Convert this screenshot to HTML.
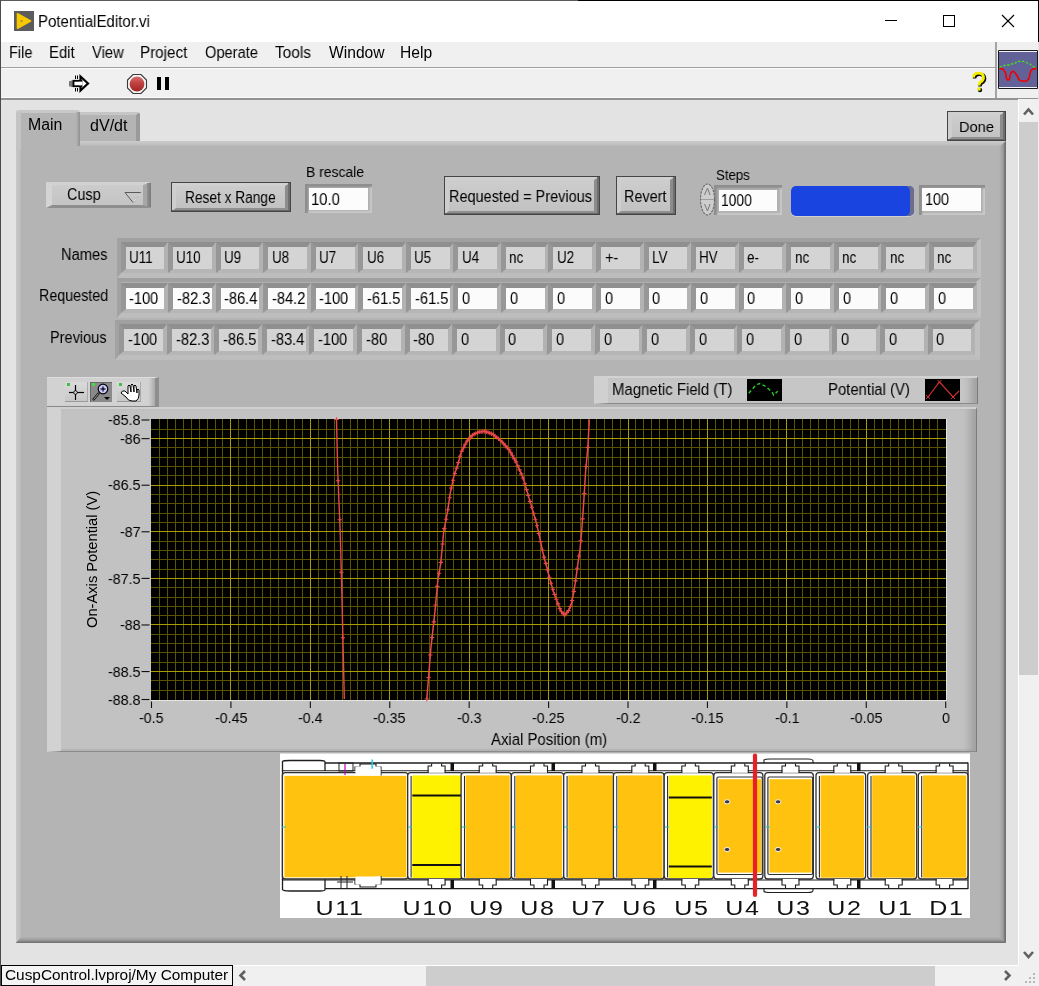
<!DOCTYPE html><html><head><meta charset="utf-8"><style>
html,body{margin:0;padding:0;width:1039px;height:986px;overflow:hidden;background:#e3e3e3;font-family:"Liberation Sans", sans-serif;position:relative}
.t{position:absolute;white-space:pre;line-height:1;will-change:transform;}
div{box-sizing:border-box}
</style></head><body>
<div style="position:absolute;left:0px;top:0px;width:1039px;height:42px;background:#fff;"></div>
<div style="position:absolute;left:0px;top:0px;width:578px;height:1px;background:#5a5a5a;"></div>
<div style="position:absolute;left:578px;top:0px;width:461px;height:1px;background:#000;"></div>
<div style="position:absolute;left:1038px;top:0px;width:1px;height:42px;background:#000;"></div>
<div style="position:absolute;left:0px;top:0px;width:1px;height:986px;background:#4a4a4a;"></div>
<div style="position:absolute;left:14px;top:11px;width:20px;height:20px;background:#5c5c5c;"></div>
<svg style="position:absolute;left:14px;top:11px" width="20" height="20"><polygon points="3.5,2.8 16.5,10 3.5,17.2" fill="#f8c800" stroke="#f8c800" stroke-width="1.6" stroke-linejoin="round"/><circle cx="7.5" cy="10" r="1.1" fill="#a08a40"/></svg>
<div class="t" style="left:38.47px;top:13.31px;font-size:16.05px;color:#000;transform-origin:0 0;transform:scaleX(0.9371);">PotentialEditor.vi</div>
<svg style="position:absolute;left:880px;top:8px" width="150" height="26"><line x1="5" y1="12.5" x2="17" y2="12.5" stroke="#000" stroke-width="1"/><rect x="63.5" y="7.5" width="11" height="11" fill="none" stroke="#000" stroke-width="1"/><line x1="122" y1="7" x2="134" y2="19" stroke="#000" stroke-width="1.1"/><line x1="134" y1="7" x2="122" y2="19" stroke="#000" stroke-width="1.1"/></svg>
<div style="position:absolute;left:1px;top:42px;width:1037px;height:25px;background:#f0f0f0;"></div>
<div style="position:absolute;left:1px;top:67px;width:995px;height:1px;background:#a0a0a0;"></div>
<div class="t" style="left:9.01px;top:45.18px;font-size:15.622px;color:#000;transform-origin:0 0;transform:scaleX(0.9311);">File</div>
<div class="t" style="left:48.98px;top:45.18px;font-size:15.622px;color:#000;transform-origin:0 0;transform:scaleX(0.9559);">Edit</div>
<div class="t" style="left:92.14px;top:45.18px;font-size:15.622px;color:#000;transform-origin:0 0;transform:scaleX(0.9477);">View</div>
<div class="t" style="left:140.25px;top:45.18px;font-size:15.622px;color:#000;transform-origin:0 0;transform:scaleX(0.9737);">Project</div>
<div class="t" style="left:204.81px;top:45.18px;font-size:15.622px;color:#000;transform-origin:0 0;transform:scaleX(0.9378);">Operate</div>
<div class="t" style="left:275.26px;top:45.18px;font-size:15.622px;color:#000;transform-origin:0 0;transform:scaleX(0.9844);">Tools</div>
<div class="t" style="left:328.84px;top:45.18px;font-size:15.622px;color:#000;transform-origin:0 0;transform:scaleX(0.9921);">Window</div>
<div class="t" style="left:400.23px;top:45.18px;font-size:15.622px;color:#000;transform-origin:0 0;transform:scaleX(0.9930);">Help</div>
<div style="position:absolute;left:1px;top:68px;width:1037px;height:30px;background:#f0f0f0;"></div>
<div style="position:absolute;left:1px;top:98px;width:1037px;height:2px;background:#929292;"></div>
<div style="position:absolute;left:1px;top:97px;width:995px;height:1px;background:#fafafa;"></div>
<div style="position:absolute;left:1px;top:68px;width:995px;height:1px;background:#fafafa;"></div>
<svg style="position:absolute;left:66px;top:72px" width="26" height="24"><polygon points="14.5,4.5 22,11.5 14.5,18.5" fill="#fff" stroke="#000" stroke-width="2.2" stroke-linejoin="miter"/><rect x="7.5" y="8.8" width="8" height="5.4" fill="#fff" stroke="#000" stroke-width="1.8"/><rect x="13.5" y="9.7" width="3" height="3.6" fill="#fff"/><line x1="4" y1="9" x2="4" y2="14.5" stroke="#000" stroke-width="1"/><line x1="6" y1="8.5" x2="6" y2="15" stroke="#000" stroke-width="1"/><line x1="9.5" y1="3.5" x2="9.5" y2="7" stroke="#000" stroke-width="1"/><line x1="11.5" y1="3.5" x2="11.5" y2="7" stroke="#000" stroke-width="1"/><line x1="9.5" y1="16" x2="9.5" y2="19.5" stroke="#000" stroke-width="1"/><line x1="11.5" y1="16" x2="11.5" y2="19.5" stroke="#000" stroke-width="1"/></svg>
<svg style="position:absolute;left:126px;top:73px" width="22" height="22"><defs><linearGradient id="rg" x1="0" y1="0" x2="0" y2="1"><stop offset="0" stop-color="#d66a6a"/><stop offset="0.45" stop-color="#c04040"/><stop offset="1" stop-color="#a02626"/></linearGradient></defs><polygon points="7,1.5 15,1.5 20.5,7 20.5,15 15,20.5 7,20.5 1.5,15 1.5,7" fill="#f4f4f4" stroke="#3a3a3a" stroke-width="1.1"/><circle cx="11" cy="11" r="7.4" fill="url(#rg)"/></svg>
<div style="position:absolute;left:157px;top:77px;width:4px;height:13px;background:#000;"></div>
<div style="position:absolute;left:165px;top:77px;width:4px;height:13px;background:#000;"></div>
<svg style="position:absolute;left:968px;top:70px" width="24" height="24"><path d="M6.5,8.5 Q6.5,4.2 11.5,4.2 Q16.5,4.2 16.5,8.5 Q16.5,11.5 13.5,13 Q12,14 12,16.5" fill="none" stroke="#111" stroke-width="3.6" stroke-linejoin="round"/><circle cx="12" cy="20" r="2.2" fill="#111"/><path d="M5.5,7.5 Q5.5,3.2 10.5,3.2 Q15.5,3.2 15.5,7.5 Q15.5,10.5 12.5,12 Q11,13 11,15.5" fill="none" stroke="#f2f000" stroke-width="2.8" stroke-linejoin="round"/><circle cx="11" cy="19" r="1.8" fill="#f2f000"/></svg>
<div style="position:absolute;left:995px;top:42px;width:2px;height:56px;background:#a4a4a4;"></div>
<div style="position:absolute;left:998px;top:50px;width:40px;height:39px;background:#1a1a1a;border-radius:1px;"></div>
<div style="position:absolute;left:999px;top:51px;width:38px;height:37px;background:#f4f4ff;"></div>
<div style="position:absolute;left:999px;top:52px;width:38px;height:35px;background:#626298;"></div>
<svg style="position:absolute;left:998px;top:50px" width="40" height="40"><polyline points="1.6,17.4 4,16.2 7.7,15 11.6,15 14,13.8 17,13.3 19.1,11.3 22.3,11.3 25.5,11.3 28.4,12.6 31.6,13.8 34.5,16.2 37,17.4" fill="none" stroke="#40e020" stroke-width="1.3" stroke-dasharray="2.5,1.5"/><polyline points="1.6,18.6 4.8,18.9 6.5,21.3 7.7,23.3 8.2,27.7 9.6,30.1 11.3,29.6 12.3,24.7 13.3,22.3 15.5,21.3 17.4,23.3 19.4,26.2 20.8,29.6 22.8,30.8 26.2,31.3 29.1,30.8 31.1,28.1 32,23.8 33,20.4 35.5,18.9 38.4,18.6" fill="none" stroke="#f00000" stroke-width="1.6"/></svg>
<div style="position:absolute;left:1018px;top:99px;width:21px;height:866px;background:#f0f0f0;border-left:1px solid #fff;"></div>
<div style="position:absolute;left:1019px;top:122px;width:19px;height:553px;background:#cdcdcd;"></div>
<svg style="position:absolute;left:1022px;top:105px" width="14" height="12"><polyline points="2,9.5 6.5,4.5 11,9.5" fill="none" stroke="#606060" stroke-width="2.6"/></svg>
<svg style="position:absolute;left:1022px;top:948px" width="14" height="12"><polyline points="2,4 6.5,9 11,4" fill="none" stroke="#606060" stroke-width="2.6"/></svg>
<div style="position:absolute;left:1px;top:965px;width:1018px;height:21px;background:#f0f0f0;border-top:1px solid #fff;"></div>
<div style="position:absolute;left:1018px;top:965px;width:21px;height:21px;background:#f0f0f0;"></div>
<div style="position:absolute;left:426px;top:966px;width:509px;height:20px;background:#cdcdcd;"></div>
<svg style="position:absolute;left:236px;top:968px" width="14" height="14"><polyline points="9,3 4.5,7.5 9,12" fill="none" stroke="#606060" stroke-width="2.6"/></svg>
<svg style="position:absolute;left:1001px;top:968px" width="14" height="14"><polyline points="4,3 8.5,7.5 4,12" fill="none" stroke="#606060" stroke-width="2.6"/></svg>
<svg style="position:absolute;left:1024px;top:973px" width="14" height="12"><rect x="9" y="0" width="2" height="2" fill="#b8b8b8"/><rect x="5" y="4" width="2" height="2" fill="#b8b8b8"/><rect x="9" y="4" width="2" height="2" fill="#b8b8b8"/><rect x="1" y="8" width="2" height="2" fill="#b8b8b8"/><rect x="5" y="8" width="2" height="2" fill="#b8b8b8"/><rect x="9" y="8" width="2" height="2" fill="#b8b8b8"/></svg>
<div style="position:absolute;left:1px;top:965px;width:232px;height:21px;background:#f4f4f4;border:1px solid #000;"></div>
<div class="t" style="left:4.73px;top:966.66px;font-size:15.408000000000001px;color:#000;transform-origin:0 0;transform:scaleX(0.9988);">CuspControl.lvproj/My Computer</div>
<div style="position:absolute;left:80px;top:112px;width:60px;height:30px;background:#b4b4b4;border-top:3px solid #c6c6c6;border-right:4px solid #9a9a9a;border-radius:0 3px 0 0;"></div>
<div style="position:absolute;left:16px;top:141px;width:990px;height:802px;background:#b4b4b4;"></div>
<div style="position:absolute;left:16px;top:141px;width:990px;height:5px;background:linear-gradient(#cacaca,#c2c2c2 60%,#b8b8b8);clip-path:polygon(0 0,100% 0,calc(100% - 6px) 100%,5px 100%);"></div>
<div style="position:absolute;left:16px;top:141px;width:5px;height:802px;background:linear-gradient(90deg,#c8c8c8,#c0c0c0 70%,#b8b8b8);clip-path:polygon(0 0,100% 5px,100% calc(100% - 5px),0 100%);"></div>
<div style="position:absolute;left:999px;top:141px;width:7px;height:802px;background:linear-gradient(90deg,#b4b4b4,#9e9e9e 55%,#7c7c7c 80%,#6a6a6a);clip-path:polygon(100% 0,100% 100%,0 calc(100% - 5px),0 6px);"></div>
<div style="position:absolute;left:16px;top:937px;width:990px;height:6px;background:linear-gradient(#b2b2b2,#9c9c9c 50%,#7e7e7e 80%,#6c6c6c);clip-path:polygon(5px 0,calc(100% - 7px) 0,100% 100%,0 100%);"></div>
<div style="position:absolute;left:16px;top:110px;width:64px;height:40px;background:#b4b4b4;border-top:3px solid #c8c8c8;border-left:5px solid #c4c4c4;border-radius:3px 3px 0 0;"></div>
<div style="position:absolute;left:76px;top:112px;width:4px;height:34px;background:linear-gradient(90deg,#b4b4b4,#a0a0a0 60%,#8e8e8e);"></div>
<div class="t" style="left:28.21px;top:116.59px;font-size:15.836000000000002px;color:#000;transform-origin:0 0;transform:scaleX(0.9905);">Main</div>
<div class="t" style="left:89.83px;top:118.49px;font-size:15.836000000000002px;color:#000;transform-origin:0 0;transform:scaleX(1.0138);">dV/dt</div>
<div style="position:absolute;left:947px;top:111px;width:59px;height:30px;border:1px solid #454545;background:#c6c6c6;"><div style="position:absolute;left:0;top:0;right:0;bottom:0;border-top:3px solid #d0d0d0;border-left:4px solid #cecece;border-right:5px solid #8c8c8c;border-bottom:3px solid #909090;background:linear-gradient(#cdcdcd,#c2c2c2);"></div><div style="position:absolute;right:0;top:0;width:2px;bottom:0;background:#6e6e6e;"></div><div style="position:absolute;left:0;right:0;height:1px;bottom:0;background:#666;"></div></div>
<div class="t" style="left:958.70px;top:118.77px;font-size:15.515px;color:#000;transform-origin:0 0;transform:scaleX(0.9423);">Done</div>
<div style="position:absolute;left:171px;top:182px;width:120px;height:30px;border:1px solid #454545;background:#c6c6c6;"><div style="position:absolute;left:0;top:0;right:0;bottom:0;border-top:3px solid #d0d0d0;border-left:4px solid #cecece;border-right:5px solid #8c8c8c;border-bottom:3px solid #909090;background:linear-gradient(#cdcdcd,#c2c2c2);"></div><div style="position:absolute;right:0;top:0;width:2px;bottom:0;background:#6e6e6e;"></div><div style="position:absolute;left:0;right:0;height:1px;bottom:0;background:#666;"></div></div>
<div class="t" style="left:185.38px;top:190.19px;font-size:15.836000000000002px;color:#000;transform-origin:0 0;transform:scaleX(0.8661);">Reset x Range</div>
<div style="position:absolute;left:444px;top:176px;width:156px;height:39px;border:1px solid #454545;background:#c6c6c6;"><div style="position:absolute;left:0;top:0;right:0;bottom:0;border-top:3px solid #d0d0d0;border-left:4px solid #cecece;border-right:5px solid #8c8c8c;border-bottom:3px solid #909090;background:linear-gradient(#cdcdcd,#c2c2c2);"></div><div style="position:absolute;right:0;top:0;width:2px;bottom:0;background:#6e6e6e;"></div><div style="position:absolute;left:0;right:0;height:1px;bottom:0;background:#666;"></div></div>
<div class="t" style="left:449.11px;top:189.09px;font-size:15.836000000000002px;color:#000;transform-origin:0 0;transform:scaleX(0.9152);">Requested = Previous</div>
<div style="position:absolute;left:616px;top:176px;width:60px;height:39px;border:1px solid #454545;background:#c6c6c6;"><div style="position:absolute;left:0;top:0;right:0;bottom:0;border-top:3px solid #d0d0d0;border-left:4px solid #cecece;border-right:5px solid #8c8c8c;border-bottom:3px solid #909090;background:linear-gradient(#cdcdcd,#c2c2c2);"></div><div style="position:absolute;right:0;top:0;width:2px;bottom:0;background:#6e6e6e;"></div><div style="position:absolute;left:0;right:0;height:1px;bottom:0;background:#666;"></div></div>
<div class="t" style="left:624.22px;top:189.09px;font-size:15.836000000000002px;color:#000;transform-origin:0 0;transform:scaleX(0.9084);">Revert</div>
<div style="position:absolute;left:46px;top:182px;width:105px;height:26px;border-top:3px solid #d2d2d2;border-left:6px solid #d4d4d4;border-right:8px solid #a6a6a6;border-bottom:3px solid #8e8e8e;background:linear-gradient(#cccccc,#c4c4c4);"></div>
<div style="position:absolute;left:147px;top:183px;width:4px;height:24px;background:linear-gradient(90deg,#929292,#7a7a7a);"></div>
<div class="t" style="left:66.98px;top:187.39px;font-size:15.836000000000002px;color:#000;transform-origin:0 0;transform:scaleX(0.9093);">Cusp</div>
<svg style="position:absolute;left:124px;top:191px" width="18" height="13"><polygon points="1,1.5 17,1.5 9,11.5" fill="none" stroke="#5a5a5a" stroke-width="1"/><polyline points="17,1.5 9,11.5" fill="none" stroke="#e8e8e8" stroke-width="1"/></svg>
<div class="t" style="left:305.66px;top:165.17px;font-size:14.445px;color:#000;transform-origin:0 0;transform:scaleX(0.9625);">B rescale</div>
<div style="position:absolute;left:305px;top:184px;width:67px;height:29px;background:#b0b0b0;box-shadow:inset 4px 4px 2px -1px #8e8e8e, inset -3px -3px 2px -1px #cacaca;"></div>
<div style="position:absolute;left:309px;top:188px;width:59px;height:22px;background:#fcfcfc;"></div>
<div class="t" style="left:311.37px;top:191.89px;font-size:15.836000000000002px;color:#000;transform-origin:0 0;transform:scaleX(0.9376);">10.0</div>
<div class="t" style="left:715.71px;top:167.12px;font-size:14.98px;color:#000;transform-origin:0 0;transform:scaleX(0.8816);">Steps</div>
<div style="position:absolute;left:714px;top:185px;width:68px;height:30px;background:#b0b0b0;box-shadow:inset 4px 4px 2px -1px #8e8e8e, inset -3px -3px 2px -1px #cacaca;"></div>
<div style="position:absolute;left:719px;top:190px;width:58px;height:21px;background:#fcfcfc;"></div>
<div class="t" style="left:720.95px;top:192.59px;font-size:15.836000000000002px;color:#000;transform-origin:0 0;transform:scaleX(0.8739);">1000</div>
<svg style="position:absolute;left:700px;top:183px" width="16" height="33"><ellipse cx="7.5" cy="16.5" rx="7" ry="15.5" fill="#cdcdcd" stroke="#6a6a6a" stroke-width="1.1" stroke-dasharray="2.5,1"/><line x1="1" y1="16.5" x2="14" y2="16.5" stroke="#a0a0a0"/><polyline points="4.5,12 7.5,5 10,12" fill="none" stroke="#777" stroke-width="1"/><polyline points="4.5,21 7.5,28 10,21" fill="none" stroke="#777" stroke-width="1"/></svg>
<div style="position:absolute;left:791px;top:185.5px;width:123px;height:30.5px;background:#1a44e0;border-radius:5px;box-shadow:inset -4px 0 0 0 #6c6c8c, 0 1px 0 0 #d0d0d0;"></div>
<div style="position:absolute;left:919px;top:185px;width:66px;height:30px;background:#b0b0b0;box-shadow:inset 4px 4px 2px -1px #8e8e8e, inset -3px -3px 2px -1px #cacaca;"></div>
<div style="position:absolute;left:922px;top:188px;width:59px;height:23px;background:#fcfcfc;"></div>
<div class="t" style="left:924.70px;top:192.39px;font-size:15.836000000000002px;color:#000;transform-origin:0 0;transform:scaleX(0.9102);">100</div>
<div style="position:absolute;left:116.5px;top:237.5px;width:864.9px;height:40.0px;background:#b0b0b0;border-top:4.5px solid #a0a0a0;border-left:4px solid #a2a2a2;border-right:5px solid #c0c0c0;border-bottom:5px solid #bdbdbd;"></div>
<div style="position:absolute;left:120.50px;top:242.0px;width:47.85px;height:30.5px;background:#d4d4d4;border-top:5px solid #8f8f8f;border-left:5.3px solid #979797;border-right:4.7px solid #b2b2b2;border-bottom:4.5px solid #b6b6b6;"></div>
<div class="t" style="left:128.87px;top:250.18px;font-size:15.622px;color:#000;transform-origin:0 0;transform:scaleX(0.8598);">U11</div>
<div style="position:absolute;left:168.05px;top:242.0px;width:47.85px;height:30.5px;background:#d4d4d4;border-top:5px solid #8f8f8f;border-left:5.3px solid #979797;border-right:4.7px solid #b2b2b2;border-bottom:4.5px solid #b6b6b6;"></div>
<div class="t" style="left:176.42px;top:250.18px;font-size:15.622px;color:#000;transform-origin:0 0;transform:scaleX(0.8598);">U10</div>
<div style="position:absolute;left:215.60px;top:242.0px;width:47.85px;height:30.5px;background:#d4d4d4;border-top:5px solid #8f8f8f;border-left:5.3px solid #979797;border-right:4.7px solid #b2b2b2;border-bottom:4.5px solid #b6b6b6;"></div>
<div class="t" style="left:223.97px;top:250.18px;font-size:15.622px;color:#000;transform-origin:0 0;transform:scaleX(0.8598);">U9</div>
<div style="position:absolute;left:263.15px;top:242.0px;width:47.85px;height:30.5px;background:#d4d4d4;border-top:5px solid #8f8f8f;border-left:5.3px solid #979797;border-right:4.7px solid #b2b2b2;border-bottom:4.5px solid #b6b6b6;"></div>
<div class="t" style="left:271.52px;top:250.18px;font-size:15.622px;color:#000;transform-origin:0 0;transform:scaleX(0.8598);">U8</div>
<div style="position:absolute;left:310.70px;top:242.0px;width:47.85px;height:30.5px;background:#d4d4d4;border-top:5px solid #8f8f8f;border-left:5.3px solid #979797;border-right:4.7px solid #b2b2b2;border-bottom:4.5px solid #b6b6b6;"></div>
<div class="t" style="left:319.07px;top:250.18px;font-size:15.622px;color:#000;transform-origin:0 0;transform:scaleX(0.8598);">U7</div>
<div style="position:absolute;left:358.25px;top:242.0px;width:47.85px;height:30.5px;background:#d4d4d4;border-top:5px solid #8f8f8f;border-left:5.3px solid #979797;border-right:4.7px solid #b2b2b2;border-bottom:4.5px solid #b6b6b6;"></div>
<div class="t" style="left:366.62px;top:250.18px;font-size:15.622px;color:#000;transform-origin:0 0;transform:scaleX(0.8598);">U6</div>
<div style="position:absolute;left:405.80px;top:242.0px;width:47.85px;height:30.5px;background:#d4d4d4;border-top:5px solid #8f8f8f;border-left:5.3px solid #979797;border-right:4.7px solid #b2b2b2;border-bottom:4.5px solid #b6b6b6;"></div>
<div class="t" style="left:414.17px;top:250.18px;font-size:15.622px;color:#000;transform-origin:0 0;transform:scaleX(0.8598);">U5</div>
<div style="position:absolute;left:453.35px;top:242.0px;width:47.85px;height:30.5px;background:#d4d4d4;border-top:5px solid #8f8f8f;border-left:5.3px solid #979797;border-right:4.7px solid #b2b2b2;border-bottom:4.5px solid #b6b6b6;"></div>
<div class="t" style="left:461.72px;top:250.18px;font-size:15.622px;color:#000;transform-origin:0 0;transform:scaleX(0.8598);">U4</div>
<div style="position:absolute;left:500.90px;top:242.0px;width:47.85px;height:30.5px;background:#d4d4d4;border-top:5px solid #8f8f8f;border-left:5.3px solid #979797;border-right:4.7px solid #b2b2b2;border-bottom:4.5px solid #b6b6b6;"></div>
<div class="t" style="left:509.41px;top:250.18px;font-size:15.622px;color:#000;transform-origin:0 0;transform:scaleX(0.8598);">nc</div>
<div style="position:absolute;left:548.45px;top:242.0px;width:47.85px;height:30.5px;background:#d4d4d4;border-top:5px solid #8f8f8f;border-left:5.3px solid #979797;border-right:4.7px solid #b2b2b2;border-bottom:4.5px solid #b6b6b6;"></div>
<div class="t" style="left:556.82px;top:250.18px;font-size:15.622px;color:#000;transform-origin:0 0;transform:scaleX(0.8598);">U2</div>
<div style="position:absolute;left:596.00px;top:242.0px;width:47.85px;height:30.5px;background:#d4d4d4;border-top:5px solid #8f8f8f;border-left:5.3px solid #979797;border-right:4.7px solid #b2b2b2;border-bottom:4.5px solid #b6b6b6;"></div>
<div class="t" style="left:604.70px;top:250.18px;font-size:15.622px;color:#000;transform-origin:0 0;transform:scaleX(0.9346);">+-</div>
<div style="position:absolute;left:643.55px;top:242.0px;width:47.85px;height:30.5px;background:#d4d4d4;border-top:5px solid #8f8f8f;border-left:5.3px solid #979797;border-right:4.7px solid #b2b2b2;border-bottom:4.5px solid #b6b6b6;"></div>
<div class="t" style="left:651.85px;top:250.18px;font-size:15.622px;color:#000;transform-origin:0 0;transform:scaleX(0.8598);">LV</div>
<div style="position:absolute;left:691.10px;top:242.0px;width:47.85px;height:30.5px;background:#d4d4d4;border-top:5px solid #8f8f8f;border-left:5.3px solid #979797;border-right:4.7px solid #b2b2b2;border-bottom:4.5px solid #b6b6b6;"></div>
<div class="t" style="left:699.40px;top:250.18px;font-size:15.622px;color:#000;transform-origin:0 0;transform:scaleX(0.8598);">HV</div>
<div style="position:absolute;left:738.65px;top:242.0px;width:47.85px;height:30.5px;background:#d4d4d4;border-top:5px solid #8f8f8f;border-left:5.3px solid #979797;border-right:4.7px solid #b2b2b2;border-bottom:4.5px solid #b6b6b6;"></div>
<div class="t" style="left:747.49px;top:250.18px;font-size:15.622px;color:#000;transform-origin:0 0;transform:scaleX(0.8598);">e-</div>
<div style="position:absolute;left:786.20px;top:242.0px;width:47.85px;height:30.5px;background:#d4d4d4;border-top:5px solid #8f8f8f;border-left:5.3px solid #979797;border-right:4.7px solid #b2b2b2;border-bottom:4.5px solid #b6b6b6;"></div>
<div class="t" style="left:794.71px;top:250.18px;font-size:15.622px;color:#000;transform-origin:0 0;transform:scaleX(0.8598);">nc</div>
<div style="position:absolute;left:833.75px;top:242.0px;width:47.85px;height:30.5px;background:#d4d4d4;border-top:5px solid #8f8f8f;border-left:5.3px solid #979797;border-right:4.7px solid #b2b2b2;border-bottom:4.5px solid #b6b6b6;"></div>
<div class="t" style="left:842.26px;top:250.18px;font-size:15.622px;color:#000;transform-origin:0 0;transform:scaleX(0.8598);">nc</div>
<div style="position:absolute;left:881.30px;top:242.0px;width:47.85px;height:30.5px;background:#d4d4d4;border-top:5px solid #8f8f8f;border-left:5.3px solid #979797;border-right:4.7px solid #b2b2b2;border-bottom:4.5px solid #b6b6b6;"></div>
<div class="t" style="left:889.81px;top:250.18px;font-size:15.622px;color:#000;transform-origin:0 0;transform:scaleX(0.8598);">nc</div>
<div style="position:absolute;left:928.85px;top:242.0px;width:47.85px;height:30.5px;background:#d4d4d4;border-top:5px solid #8f8f8f;border-left:5.3px solid #979797;border-right:4.7px solid #b2b2b2;border-bottom:4.5px solid #b6b6b6;"></div>
<div class="t" style="left:937.36px;top:250.18px;font-size:15.622px;color:#000;transform-origin:0 0;transform:scaleX(0.8598);">nc</div>
<div style="position:absolute;left:116.5px;top:278px;width:864.9px;height:40px;background:#b0b0b0;border-top:4.5px solid #a0a0a0;border-left:4px solid #a2a2a2;border-right:5px solid #c0c0c0;border-bottom:5px solid #bdbdbd;"></div>
<div style="position:absolute;left:120.50px;top:282.5px;width:47.85px;height:30.5px;background:#fbfbfb;border-top:5px solid #8f8f8f;border-left:5.3px solid #979797;border-right:4.7px solid #b2b2b2;border-bottom:4.5px solid #b6b6b6;"></div>
<div class="t" style="left:129.26px;top:290.68px;font-size:15.622px;color:#000;transform-origin:0 0;transform:scaleX(0.9346);">-100</div>
<div style="position:absolute;left:168.05px;top:282.5px;width:47.85px;height:30.5px;background:#fbfbfb;border-top:5px solid #8f8f8f;border-left:5.3px solid #979797;border-right:4.7px solid #b2b2b2;border-bottom:4.5px solid #b6b6b6;"></div>
<div class="t" style="left:176.81px;top:290.68px;font-size:15.622px;color:#000;transform-origin:0 0;transform:scaleX(0.9346);">-82.3</div>
<div style="position:absolute;left:215.60px;top:282.5px;width:47.85px;height:30.5px;background:#fbfbfb;border-top:5px solid #8f8f8f;border-left:5.3px solid #979797;border-right:4.7px solid #b2b2b2;border-bottom:4.5px solid #b6b6b6;"></div>
<div class="t" style="left:224.36px;top:290.68px;font-size:15.622px;color:#000;transform-origin:0 0;transform:scaleX(0.9346);">-86.4</div>
<div style="position:absolute;left:263.15px;top:282.5px;width:47.85px;height:30.5px;background:#fbfbfb;border-top:5px solid #8f8f8f;border-left:5.3px solid #979797;border-right:4.7px solid #b2b2b2;border-bottom:4.5px solid #b6b6b6;"></div>
<div class="t" style="left:271.91px;top:290.68px;font-size:15.622px;color:#000;transform-origin:0 0;transform:scaleX(0.9346);">-84.2</div>
<div style="position:absolute;left:310.70px;top:282.5px;width:47.85px;height:30.5px;background:#fbfbfb;border-top:5px solid #8f8f8f;border-left:5.3px solid #979797;border-right:4.7px solid #b2b2b2;border-bottom:4.5px solid #b6b6b6;"></div>
<div class="t" style="left:319.46px;top:290.68px;font-size:15.622px;color:#000;transform-origin:0 0;transform:scaleX(0.9346);">-100</div>
<div style="position:absolute;left:358.25px;top:282.5px;width:47.85px;height:30.5px;background:#fbfbfb;border-top:5px solid #8f8f8f;border-left:5.3px solid #979797;border-right:4.7px solid #b2b2b2;border-bottom:4.5px solid #b6b6b6;"></div>
<div class="t" style="left:367.01px;top:290.68px;font-size:15.622px;color:#000;transform-origin:0 0;transform:scaleX(0.9346);">-61.5</div>
<div style="position:absolute;left:405.80px;top:282.5px;width:47.85px;height:30.5px;background:#fbfbfb;border-top:5px solid #8f8f8f;border-left:5.3px solid #979797;border-right:4.7px solid #b2b2b2;border-bottom:4.5px solid #b6b6b6;"></div>
<div class="t" style="left:414.56px;top:290.68px;font-size:15.622px;color:#000;transform-origin:0 0;transform:scaleX(0.9346);">-61.5</div>
<div style="position:absolute;left:453.35px;top:282.5px;width:47.85px;height:30.5px;background:#fbfbfb;border-top:5px solid #8f8f8f;border-left:5.3px solid #979797;border-right:4.7px solid #b2b2b2;border-bottom:4.5px solid #b6b6b6;"></div>
<div class="t" style="left:462.18px;top:290.68px;font-size:15.622px;color:#000;transform-origin:0 0;transform:scaleX(0.9346);">0</div>
<div style="position:absolute;left:500.90px;top:282.5px;width:47.85px;height:30.5px;background:#fbfbfb;border-top:5px solid #8f8f8f;border-left:5.3px solid #979797;border-right:4.7px solid #b2b2b2;border-bottom:4.5px solid #b6b6b6;"></div>
<div class="t" style="left:509.73px;top:290.68px;font-size:15.622px;color:#000;transform-origin:0 0;transform:scaleX(0.9346);">0</div>
<div style="position:absolute;left:548.45px;top:282.5px;width:47.85px;height:30.5px;background:#fbfbfb;border-top:5px solid #8f8f8f;border-left:5.3px solid #979797;border-right:4.7px solid #b2b2b2;border-bottom:4.5px solid #b6b6b6;"></div>
<div class="t" style="left:557.28px;top:290.68px;font-size:15.622px;color:#000;transform-origin:0 0;transform:scaleX(0.9346);">0</div>
<div style="position:absolute;left:596.00px;top:282.5px;width:47.85px;height:30.5px;background:#fbfbfb;border-top:5px solid #8f8f8f;border-left:5.3px solid #979797;border-right:4.7px solid #b2b2b2;border-bottom:4.5px solid #b6b6b6;"></div>
<div class="t" style="left:604.83px;top:290.68px;font-size:15.622px;color:#000;transform-origin:0 0;transform:scaleX(0.9346);">0</div>
<div style="position:absolute;left:643.55px;top:282.5px;width:47.85px;height:30.5px;background:#fbfbfb;border-top:5px solid #8f8f8f;border-left:5.3px solid #979797;border-right:4.7px solid #b2b2b2;border-bottom:4.5px solid #b6b6b6;"></div>
<div class="t" style="left:652.38px;top:290.68px;font-size:15.622px;color:#000;transform-origin:0 0;transform:scaleX(0.9346);">0</div>
<div style="position:absolute;left:691.10px;top:282.5px;width:47.85px;height:30.5px;background:#fbfbfb;border-top:5px solid #8f8f8f;border-left:5.3px solid #979797;border-right:4.7px solid #b2b2b2;border-bottom:4.5px solid #b6b6b6;"></div>
<div class="t" style="left:699.93px;top:290.68px;font-size:15.622px;color:#000;transform-origin:0 0;transform:scaleX(0.9346);">0</div>
<div style="position:absolute;left:738.65px;top:282.5px;width:47.85px;height:30.5px;background:#fbfbfb;border-top:5px solid #8f8f8f;border-left:5.3px solid #979797;border-right:4.7px solid #b2b2b2;border-bottom:4.5px solid #b6b6b6;"></div>
<div class="t" style="left:747.48px;top:290.68px;font-size:15.622px;color:#000;transform-origin:0 0;transform:scaleX(0.9346);">0</div>
<div style="position:absolute;left:786.20px;top:282.5px;width:47.85px;height:30.5px;background:#fbfbfb;border-top:5px solid #8f8f8f;border-left:5.3px solid #979797;border-right:4.7px solid #b2b2b2;border-bottom:4.5px solid #b6b6b6;"></div>
<div class="t" style="left:795.03px;top:290.68px;font-size:15.622px;color:#000;transform-origin:0 0;transform:scaleX(0.9346);">0</div>
<div style="position:absolute;left:833.75px;top:282.5px;width:47.85px;height:30.5px;background:#fbfbfb;border-top:5px solid #8f8f8f;border-left:5.3px solid #979797;border-right:4.7px solid #b2b2b2;border-bottom:4.5px solid #b6b6b6;"></div>
<div class="t" style="left:842.58px;top:290.68px;font-size:15.622px;color:#000;transform-origin:0 0;transform:scaleX(0.9346);">0</div>
<div style="position:absolute;left:881.30px;top:282.5px;width:47.85px;height:30.5px;background:#fbfbfb;border-top:5px solid #8f8f8f;border-left:5.3px solid #979797;border-right:4.7px solid #b2b2b2;border-bottom:4.5px solid #b6b6b6;"></div>
<div class="t" style="left:890.13px;top:290.68px;font-size:15.622px;color:#000;transform-origin:0 0;transform:scaleX(0.9346);">0</div>
<div style="position:absolute;left:928.85px;top:282.5px;width:47.85px;height:30.5px;background:#fbfbfb;border-top:5px solid #8f8f8f;border-left:5.3px solid #979797;border-right:4.7px solid #b2b2b2;border-bottom:4.5px solid #b6b6b6;"></div>
<div class="t" style="left:937.68px;top:290.68px;font-size:15.622px;color:#000;transform-origin:0 0;transform:scaleX(0.9346);">0</div>
<div style="position:absolute;left:115.2px;top:319.5px;width:865.0px;height:40.0px;background:#b0b0b0;border-top:4.5px solid #a0a0a0;border-left:4px solid #a2a2a2;border-right:5px solid #c0c0c0;border-bottom:5px solid #bdbdbd;"></div>
<div style="position:absolute;left:119.20px;top:324.0px;width:47.85px;height:30.5px;background:#d4d4d4;border-top:5px solid #8f8f8f;border-left:5.3px solid #979797;border-right:4.7px solid #b2b2b2;border-bottom:4.5px solid #b6b6b6;"></div>
<div class="t" style="left:127.96px;top:332.18px;font-size:15.622px;color:#000;transform-origin:0 0;transform:scaleX(0.9346);">-100</div>
<div style="position:absolute;left:166.75px;top:324.0px;width:47.85px;height:30.5px;background:#d4d4d4;border-top:5px solid #8f8f8f;border-left:5.3px solid #979797;border-right:4.7px solid #b2b2b2;border-bottom:4.5px solid #b6b6b6;"></div>
<div class="t" style="left:175.51px;top:332.18px;font-size:15.622px;color:#000;transform-origin:0 0;transform:scaleX(0.9346);">-82.3</div>
<div style="position:absolute;left:214.30px;top:324.0px;width:47.85px;height:30.5px;background:#d4d4d4;border-top:5px solid #8f8f8f;border-left:5.3px solid #979797;border-right:4.7px solid #b2b2b2;border-bottom:4.5px solid #b6b6b6;"></div>
<div class="t" style="left:223.06px;top:332.18px;font-size:15.622px;color:#000;transform-origin:0 0;transform:scaleX(0.9346);">-86.5</div>
<div style="position:absolute;left:261.85px;top:324.0px;width:47.85px;height:30.5px;background:#d4d4d4;border-top:5px solid #8f8f8f;border-left:5.3px solid #979797;border-right:4.7px solid #b2b2b2;border-bottom:4.5px solid #b6b6b6;"></div>
<div class="t" style="left:270.61px;top:332.18px;font-size:15.622px;color:#000;transform-origin:0 0;transform:scaleX(0.9346);">-83.4</div>
<div style="position:absolute;left:309.40px;top:324.0px;width:47.85px;height:30.5px;background:#d4d4d4;border-top:5px solid #8f8f8f;border-left:5.3px solid #979797;border-right:4.7px solid #b2b2b2;border-bottom:4.5px solid #b6b6b6;"></div>
<div class="t" style="left:318.16px;top:332.18px;font-size:15.622px;color:#000;transform-origin:0 0;transform:scaleX(0.9346);">-100</div>
<div style="position:absolute;left:356.95px;top:324.0px;width:47.85px;height:30.5px;background:#d4d4d4;border-top:5px solid #8f8f8f;border-left:5.3px solid #979797;border-right:4.7px solid #b2b2b2;border-bottom:4.5px solid #b6b6b6;"></div>
<div class="t" style="left:365.71px;top:332.18px;font-size:15.622px;color:#000;transform-origin:0 0;transform:scaleX(0.9346);">-80</div>
<div style="position:absolute;left:404.50px;top:324.0px;width:47.85px;height:30.5px;background:#d4d4d4;border-top:5px solid #8f8f8f;border-left:5.3px solid #979797;border-right:4.7px solid #b2b2b2;border-bottom:4.5px solid #b6b6b6;"></div>
<div class="t" style="left:413.26px;top:332.18px;font-size:15.622px;color:#000;transform-origin:0 0;transform:scaleX(0.9346);">-80</div>
<div style="position:absolute;left:452.05px;top:324.0px;width:47.85px;height:30.5px;background:#d4d4d4;border-top:5px solid #8f8f8f;border-left:5.3px solid #979797;border-right:4.7px solid #b2b2b2;border-bottom:4.5px solid #b6b6b6;"></div>
<div class="t" style="left:460.88px;top:332.18px;font-size:15.622px;color:#000;transform-origin:0 0;transform:scaleX(0.9346);">0</div>
<div style="position:absolute;left:499.60px;top:324.0px;width:47.85px;height:30.5px;background:#d4d4d4;border-top:5px solid #8f8f8f;border-left:5.3px solid #979797;border-right:4.7px solid #b2b2b2;border-bottom:4.5px solid #b6b6b6;"></div>
<div class="t" style="left:508.43px;top:332.18px;font-size:15.622px;color:#000;transform-origin:0 0;transform:scaleX(0.9346);">0</div>
<div style="position:absolute;left:547.15px;top:324.0px;width:47.85px;height:30.5px;background:#d4d4d4;border-top:5px solid #8f8f8f;border-left:5.3px solid #979797;border-right:4.7px solid #b2b2b2;border-bottom:4.5px solid #b6b6b6;"></div>
<div class="t" style="left:555.98px;top:332.18px;font-size:15.622px;color:#000;transform-origin:0 0;transform:scaleX(0.9346);">0</div>
<div style="position:absolute;left:594.70px;top:324.0px;width:47.85px;height:30.5px;background:#d4d4d4;border-top:5px solid #8f8f8f;border-left:5.3px solid #979797;border-right:4.7px solid #b2b2b2;border-bottom:4.5px solid #b6b6b6;"></div>
<div class="t" style="left:603.53px;top:332.18px;font-size:15.622px;color:#000;transform-origin:0 0;transform:scaleX(0.9346);">0</div>
<div style="position:absolute;left:642.25px;top:324.0px;width:47.85px;height:30.5px;background:#d4d4d4;border-top:5px solid #8f8f8f;border-left:5.3px solid #979797;border-right:4.7px solid #b2b2b2;border-bottom:4.5px solid #b6b6b6;"></div>
<div class="t" style="left:651.08px;top:332.18px;font-size:15.622px;color:#000;transform-origin:0 0;transform:scaleX(0.9346);">0</div>
<div style="position:absolute;left:689.80px;top:324.0px;width:47.85px;height:30.5px;background:#d4d4d4;border-top:5px solid #8f8f8f;border-left:5.3px solid #979797;border-right:4.7px solid #b2b2b2;border-bottom:4.5px solid #b6b6b6;"></div>
<div class="t" style="left:698.63px;top:332.18px;font-size:15.622px;color:#000;transform-origin:0 0;transform:scaleX(0.9346);">0</div>
<div style="position:absolute;left:737.35px;top:324.0px;width:47.85px;height:30.5px;background:#d4d4d4;border-top:5px solid #8f8f8f;border-left:5.3px solid #979797;border-right:4.7px solid #b2b2b2;border-bottom:4.5px solid #b6b6b6;"></div>
<div class="t" style="left:746.18px;top:332.18px;font-size:15.622px;color:#000;transform-origin:0 0;transform:scaleX(0.9346);">0</div>
<div style="position:absolute;left:784.90px;top:324.0px;width:47.85px;height:30.5px;background:#d4d4d4;border-top:5px solid #8f8f8f;border-left:5.3px solid #979797;border-right:4.7px solid #b2b2b2;border-bottom:4.5px solid #b6b6b6;"></div>
<div class="t" style="left:793.73px;top:332.18px;font-size:15.622px;color:#000;transform-origin:0 0;transform:scaleX(0.9346);">0</div>
<div style="position:absolute;left:832.45px;top:324.0px;width:47.85px;height:30.5px;background:#d4d4d4;border-top:5px solid #8f8f8f;border-left:5.3px solid #979797;border-right:4.7px solid #b2b2b2;border-bottom:4.5px solid #b6b6b6;"></div>
<div class="t" style="left:841.28px;top:332.18px;font-size:15.622px;color:#000;transform-origin:0 0;transform:scaleX(0.9346);">0</div>
<div style="position:absolute;left:880.00px;top:324.0px;width:47.85px;height:30.5px;background:#d4d4d4;border-top:5px solid #8f8f8f;border-left:5.3px solid #979797;border-right:4.7px solid #b2b2b2;border-bottom:4.5px solid #b6b6b6;"></div>
<div class="t" style="left:888.83px;top:332.18px;font-size:15.622px;color:#000;transform-origin:0 0;transform:scaleX(0.9346);">0</div>
<div style="position:absolute;left:927.55px;top:324.0px;width:47.85px;height:30.5px;background:#d4d4d4;border-top:5px solid #8f8f8f;border-left:5.3px solid #979797;border-right:4.7px solid #b2b2b2;border-bottom:4.5px solid #b6b6b6;"></div>
<div class="t" style="left:936.38px;top:332.18px;font-size:15.622px;color:#000;transform-origin:0 0;transform:scaleX(0.9346);">0</div>
<div class="t" style="left:60.50px;top:247.29px;font-size:15.836000000000002px;color:#000;transform-origin:0 0;transform:scaleX(0.9255);">Names</div>
<div class="t" style="left:39.23px;top:288.49px;font-size:15.836000000000002px;color:#000;transform-origin:0 0;transform:scaleX(0.9033);">Requested</div>
<div class="t" style="left:50.31px;top:329.89px;font-size:15.836000000000002px;color:#000;transform-origin:0 0;transform:scaleX(0.9188);">Previous</div>
<div style="position:absolute;left:47px;top:377px;width:112px;height:30px;background:#d2d2d2;border-top:1px solid #dedede;border-right:4px solid #8e8e8e;border-bottom:1px solid #8a8a8a;box-shadow:inset -6px 0 4px -3px #a8a8a8;"></div>
<div style="position:absolute;left:65px;top:382px;width:23px;height:20px;background:linear-gradient(#dadada,#c8c8c8);border-right:1px solid #aaa;border-bottom:1px solid #999;"></div>
<div style="position:absolute;left:90px;top:382px;width:22px;height:20px;background:#8a8a8a;border-top:1px solid #666;border-left:1px solid #666;"></div>
<div style="position:absolute;left:117px;top:382px;width:24px;height:20px;background:linear-gradient(#dadada,#c8c8c8);border-right:1px solid #aaa;border-bottom:1px solid #999;"></div>
<svg style="position:absolute;left:64px;top:381px" width="80" height="22"><rect x="3" y="2" width="3" height="3" fill="#40c040"/><line x1="5" y1="11.5" x2="20" y2="11.5" stroke="#000" stroke-width="1.2"/><line x1="11.5" y1="4" x2="11.5" y2="19" stroke="#000" stroke-width="1.2"/><circle cx="11.5" cy="11.5" r="1.8" fill="#ccc" stroke="#000" stroke-width="0.8"/><rect x="28" y="2" width="3" height="3" fill="#40e040"/><circle cx="39" cy="8" r="4.8" fill="#c8c8ff" stroke="#000" stroke-width="1.2"/><line x1="36.5" y1="8" x2="41.5" y2="8" stroke="#000" stroke-width="1.2"/><line x1="39" y1="5.5" x2="39" y2="10.5" stroke="#000" stroke-width="1.2"/><line x1="29" y1="19" x2="35" y2="12" stroke="#000" stroke-width="2.2"/><line x1="29.5" y1="18.5" x2="34.5" y2="12.5" stroke="#ddd" stroke-width="0.8"/><polygon points="40,16 46,16 43,19" fill="#000"/><rect x="55" y="2" width="3" height="3" fill="#40c040"/><path d="M57,12 L62,16 Q64,20 68,20 L72,20 Q75,18 75,14 L75,9 Q74,7 73,9 L73,12 L72,5 Q71,3 70,5 L70,11 L69,4 Q68,2 67,4 L67,11 L66,5 Q65,3 64,5 L64,13 L61,10 Q58,9 57,12 Z" fill="#fff" stroke="#000" stroke-width="1"/></svg>
<div style="position:absolute;left:46.5px;top:407px;width:930px;height:345px;background:#c2c2c2;border-top:2.5px solid #d0d0d0;border-left:14px solid #d2d2d2;border-right:1.5px solid #7c7c7c;border-bottom:1.5px solid #8a8a8a;box-shadow:inset -12px 0 8px -6px #a0a0a0, inset 0 -2px 0 #b6b6b6;"></div>
<div style="position:absolute;left:593.5px;top:376px;width:384px;height:28px;background:#c6c6c6;border-top:2px solid #d2d2d2;border-left:14px solid #d0d0d0;border-right:1.5px solid #7a7a7a;border-bottom:1.5px solid #8a8a8a;box-shadow:inset -12px 0 8px -6px #a0a0a0;"></div>
<div class="t" style="left:611.87px;top:381.68px;font-size:15.622px;color:#000;transform-origin:0 0;transform:scaleX(0.9577);">Magnetic Field (T)</div>
<div class="t" style="left:828.08px;top:381.68px;font-size:15.622px;color:#000;transform-origin:0 0;transform:scaleX(0.9534);">Potential (V)</div>
<svg style="position:absolute;left:747px;top:379px" width="35" height="22"><rect width="35" height="22" fill="#000"/><polyline points="1.8,14.2 8.5,6.5 12.4,4.5 17.2,6.5 22,10.3 24.9,13.2 26.8,16.1 30.7,12.2" fill="none" stroke="#2ec82e" stroke-width="1.4" stroke-dasharray="3.5,2.5"/></svg>
<svg style="position:absolute;left:924.5px;top:379px" width="35" height="22"><rect width="35" height="22" fill="#000"/><polyline points="3,18 14.5,3 28,18 34,12" fill="none" stroke="#d03030" stroke-width="1.2"/><path d="M1,16 l4,4 M1,20 l4,-4 M12.5,1 l4,4 M12.5,5 l4,-4 M26,16 l4,4 M26,20 l4,-4" stroke="#d03030" stroke-width="1"/></svg>
<svg style="position:absolute;left:0;top:0" width="1039" height="986" shape-rendering="crispEdges"><rect x="151" y="419" width="795" height="281" fill="#000"/><line x1="159.5" y1="419" x2="159.5" y2="700" stroke="#5a5400" stroke-width="1"/><line x1="167.5" y1="419" x2="167.5" y2="700" stroke="#5a5400" stroke-width="1"/><line x1="175.5" y1="419" x2="175.5" y2="700" stroke="#5a5400" stroke-width="1"/><line x1="183.5" y1="419" x2="183.5" y2="700" stroke="#5a5400" stroke-width="1"/><line x1="191.5" y1="419" x2="191.5" y2="700" stroke="#5a5400" stroke-width="1"/><line x1="199.5" y1="419" x2="199.5" y2="700" stroke="#5a5400" stroke-width="1"/><line x1="207.5" y1="419" x2="207.5" y2="700" stroke="#5a5400" stroke-width="1"/><line x1="215.5" y1="419" x2="215.5" y2="700" stroke="#5a5400" stroke-width="1"/><line x1="222.5" y1="419" x2="222.5" y2="700" stroke="#5a5400" stroke-width="1"/><line x1="238.5" y1="419" x2="238.5" y2="700" stroke="#5a5400" stroke-width="1"/><line x1="246.5" y1="419" x2="246.5" y2="700" stroke="#5a5400" stroke-width="1"/><line x1="254.5" y1="419" x2="254.5" y2="700" stroke="#5a5400" stroke-width="1"/><line x1="262.5" y1="419" x2="262.5" y2="700" stroke="#5a5400" stroke-width="1"/><line x1="270.5" y1="419" x2="270.5" y2="700" stroke="#5a5400" stroke-width="1"/><line x1="278.5" y1="419" x2="278.5" y2="700" stroke="#5a5400" stroke-width="1"/><line x1="286.5" y1="419" x2="286.5" y2="700" stroke="#5a5400" stroke-width="1"/><line x1="294.5" y1="419" x2="294.5" y2="700" stroke="#5a5400" stroke-width="1"/><line x1="302.5" y1="419" x2="302.5" y2="700" stroke="#5a5400" stroke-width="1"/><line x1="318.5" y1="419" x2="318.5" y2="700" stroke="#5a5400" stroke-width="1"/><line x1="326.5" y1="419" x2="326.5" y2="700" stroke="#5a5400" stroke-width="1"/><line x1="334.5" y1="419" x2="334.5" y2="700" stroke="#5a5400" stroke-width="1"/><line x1="342.5" y1="419" x2="342.5" y2="700" stroke="#5a5400" stroke-width="1"/><line x1="350.5" y1="419" x2="350.5" y2="700" stroke="#5a5400" stroke-width="1"/><line x1="357.5" y1="419" x2="357.5" y2="700" stroke="#5a5400" stroke-width="1"/><line x1="365.5" y1="419" x2="365.5" y2="700" stroke="#5a5400" stroke-width="1"/><line x1="373.5" y1="419" x2="373.5" y2="700" stroke="#5a5400" stroke-width="1"/><line x1="381.5" y1="419" x2="381.5" y2="700" stroke="#5a5400" stroke-width="1"/><line x1="397.5" y1="419" x2="397.5" y2="700" stroke="#5a5400" stroke-width="1"/><line x1="405.5" y1="419" x2="405.5" y2="700" stroke="#5a5400" stroke-width="1"/><line x1="413.5" y1="419" x2="413.5" y2="700" stroke="#5a5400" stroke-width="1"/><line x1="421.5" y1="419" x2="421.5" y2="700" stroke="#5a5400" stroke-width="1"/><line x1="429.5" y1="419" x2="429.5" y2="700" stroke="#5a5400" stroke-width="1"/><line x1="437.5" y1="419" x2="437.5" y2="700" stroke="#5a5400" stroke-width="1"/><line x1="445.5" y1="419" x2="445.5" y2="700" stroke="#5a5400" stroke-width="1"/><line x1="453.5" y1="419" x2="453.5" y2="700" stroke="#5a5400" stroke-width="1"/><line x1="461.5" y1="419" x2="461.5" y2="700" stroke="#5a5400" stroke-width="1"/><line x1="477.5" y1="419" x2="477.5" y2="700" stroke="#5a5400" stroke-width="1"/><line x1="485.5" y1="419" x2="485.5" y2="700" stroke="#5a5400" stroke-width="1"/><line x1="493.5" y1="419" x2="493.5" y2="700" stroke="#5a5400" stroke-width="1"/><line x1="500.5" y1="419" x2="500.5" y2="700" stroke="#5a5400" stroke-width="1"/><line x1="508.5" y1="419" x2="508.5" y2="700" stroke="#5a5400" stroke-width="1"/><line x1="516.5" y1="419" x2="516.5" y2="700" stroke="#5a5400" stroke-width="1"/><line x1="524.5" y1="419" x2="524.5" y2="700" stroke="#5a5400" stroke-width="1"/><line x1="532.5" y1="419" x2="532.5" y2="700" stroke="#5a5400" stroke-width="1"/><line x1="540.5" y1="419" x2="540.5" y2="700" stroke="#5a5400" stroke-width="1"/><line x1="556.5" y1="419" x2="556.5" y2="700" stroke="#5a5400" stroke-width="1"/><line x1="564.5" y1="419" x2="564.5" y2="700" stroke="#5a5400" stroke-width="1"/><line x1="572.5" y1="419" x2="572.5" y2="700" stroke="#5a5400" stroke-width="1"/><line x1="580.5" y1="419" x2="580.5" y2="700" stroke="#5a5400" stroke-width="1"/><line x1="588.5" y1="419" x2="588.5" y2="700" stroke="#5a5400" stroke-width="1"/><line x1="596.5" y1="419" x2="596.5" y2="700" stroke="#5a5400" stroke-width="1"/><line x1="604.5" y1="419" x2="604.5" y2="700" stroke="#5a5400" stroke-width="1"/><line x1="612.5" y1="419" x2="612.5" y2="700" stroke="#5a5400" stroke-width="1"/><line x1="620.5" y1="419" x2="620.5" y2="700" stroke="#5a5400" stroke-width="1"/><line x1="635.5" y1="419" x2="635.5" y2="700" stroke="#5a5400" stroke-width="1"/><line x1="643.5" y1="419" x2="643.5" y2="700" stroke="#5a5400" stroke-width="1"/><line x1="651.5" y1="419" x2="651.5" y2="700" stroke="#5a5400" stroke-width="1"/><line x1="659.5" y1="419" x2="659.5" y2="700" stroke="#5a5400" stroke-width="1"/><line x1="667.5" y1="419" x2="667.5" y2="700" stroke="#5a5400" stroke-width="1"/><line x1="675.5" y1="419" x2="675.5" y2="700" stroke="#5a5400" stroke-width="1"/><line x1="683.5" y1="419" x2="683.5" y2="700" stroke="#5a5400" stroke-width="1"/><line x1="691.5" y1="419" x2="691.5" y2="700" stroke="#5a5400" stroke-width="1"/><line x1="699.5" y1="419" x2="699.5" y2="700" stroke="#5a5400" stroke-width="1"/><line x1="715.5" y1="419" x2="715.5" y2="700" stroke="#5a5400" stroke-width="1"/><line x1="723.5" y1="419" x2="723.5" y2="700" stroke="#5a5400" stroke-width="1"/><line x1="731.5" y1="419" x2="731.5" y2="700" stroke="#5a5400" stroke-width="1"/><line x1="739.5" y1="419" x2="739.5" y2="700" stroke="#5a5400" stroke-width="1"/><line x1="747.5" y1="419" x2="747.5" y2="700" stroke="#5a5400" stroke-width="1"/><line x1="755.5" y1="419" x2="755.5" y2="700" stroke="#5a5400" stroke-width="1"/><line x1="763.5" y1="419" x2="763.5" y2="700" stroke="#5a5400" stroke-width="1"/><line x1="770.5" y1="419" x2="770.5" y2="700" stroke="#5a5400" stroke-width="1"/><line x1="778.5" y1="419" x2="778.5" y2="700" stroke="#5a5400" stroke-width="1"/><line x1="794.5" y1="419" x2="794.5" y2="700" stroke="#5a5400" stroke-width="1"/><line x1="802.5" y1="419" x2="802.5" y2="700" stroke="#5a5400" stroke-width="1"/><line x1="810.5" y1="419" x2="810.5" y2="700" stroke="#5a5400" stroke-width="1"/><line x1="818.5" y1="419" x2="818.5" y2="700" stroke="#5a5400" stroke-width="1"/><line x1="826.5" y1="419" x2="826.5" y2="700" stroke="#5a5400" stroke-width="1"/><line x1="834.5" y1="419" x2="834.5" y2="700" stroke="#5a5400" stroke-width="1"/><line x1="842.5" y1="419" x2="842.5" y2="700" stroke="#5a5400" stroke-width="1"/><line x1="850.5" y1="419" x2="850.5" y2="700" stroke="#5a5400" stroke-width="1"/><line x1="858.5" y1="419" x2="858.5" y2="700" stroke="#5a5400" stroke-width="1"/><line x1="874.5" y1="419" x2="874.5" y2="700" stroke="#5a5400" stroke-width="1"/><line x1="882.5" y1="419" x2="882.5" y2="700" stroke="#5a5400" stroke-width="1"/><line x1="890.5" y1="419" x2="890.5" y2="700" stroke="#5a5400" stroke-width="1"/><line x1="898.5" y1="419" x2="898.5" y2="700" stroke="#5a5400" stroke-width="1"/><line x1="905.5" y1="419" x2="905.5" y2="700" stroke="#5a5400" stroke-width="1"/><line x1="913.5" y1="419" x2="913.5" y2="700" stroke="#5a5400" stroke-width="1"/><line x1="921.5" y1="419" x2="921.5" y2="700" stroke="#5a5400" stroke-width="1"/><line x1="929.5" y1="419" x2="929.5" y2="700" stroke="#5a5400" stroke-width="1"/><line x1="937.5" y1="419" x2="937.5" y2="700" stroke="#5a5400" stroke-width="1"/><line x1="151" y1="429.5" x2="946" y2="429.5" stroke="#5a5400" stroke-width="1"/><line x1="151" y1="447.5" x2="946" y2="447.5" stroke="#5a5400" stroke-width="1"/><line x1="151" y1="457.5" x2="946" y2="457.5" stroke="#5a5400" stroke-width="1"/><line x1="151" y1="466.5" x2="946" y2="466.5" stroke="#5a5400" stroke-width="1"/><line x1="151" y1="475.5" x2="946" y2="475.5" stroke="#5a5400" stroke-width="1"/><line x1="151" y1="494.5" x2="946" y2="494.5" stroke="#5a5400" stroke-width="1"/><line x1="151" y1="503.5" x2="946" y2="503.5" stroke="#5a5400" stroke-width="1"/><line x1="151" y1="513.5" x2="946" y2="513.5" stroke="#5a5400" stroke-width="1"/><line x1="151" y1="522.5" x2="946" y2="522.5" stroke="#5a5400" stroke-width="1"/><line x1="151" y1="541.5" x2="946" y2="541.5" stroke="#5a5400" stroke-width="1"/><line x1="151" y1="550.5" x2="946" y2="550.5" stroke="#5a5400" stroke-width="1"/><line x1="151" y1="559.5" x2="946" y2="559.5" stroke="#5a5400" stroke-width="1"/><line x1="151" y1="569.5" x2="946" y2="569.5" stroke="#5a5400" stroke-width="1"/><line x1="151" y1="587.5" x2="946" y2="587.5" stroke="#5a5400" stroke-width="1"/><line x1="151" y1="597.5" x2="946" y2="597.5" stroke="#5a5400" stroke-width="1"/><line x1="151" y1="606.5" x2="946" y2="606.5" stroke="#5a5400" stroke-width="1"/><line x1="151" y1="615.5" x2="946" y2="615.5" stroke="#5a5400" stroke-width="1"/><line x1="151" y1="634.5" x2="946" y2="634.5" stroke="#5a5400" stroke-width="1"/><line x1="151" y1="643.5" x2="946" y2="643.5" stroke="#5a5400" stroke-width="1"/><line x1="151" y1="652.5" x2="946" y2="652.5" stroke="#5a5400" stroke-width="1"/><line x1="151" y1="662.5" x2="946" y2="662.5" stroke="#5a5400" stroke-width="1"/><line x1="151" y1="680.5" x2="946" y2="680.5" stroke="#5a5400" stroke-width="1"/><line x1="151" y1="690.5" x2="946" y2="690.5" stroke="#5a5400" stroke-width="1"/><line x1="230.5" y1="419" x2="230.5" y2="700" stroke="#ab9c00" stroke-width="1"/><line x1="310.5" y1="419" x2="310.5" y2="700" stroke="#ab9c00" stroke-width="1"/><line x1="389.5" y1="419" x2="389.5" y2="700" stroke="#ab9c00" stroke-width="1"/><line x1="469.5" y1="419" x2="469.5" y2="700" stroke="#ab9c00" stroke-width="1"/><line x1="548.5" y1="419" x2="548.5" y2="700" stroke="#ab9c00" stroke-width="1"/><line x1="628.5" y1="419" x2="628.5" y2="700" stroke="#ab9c00" stroke-width="1"/><line x1="707.5" y1="419" x2="707.5" y2="700" stroke="#ab9c00" stroke-width="1"/><line x1="786.5" y1="419" x2="786.5" y2="700" stroke="#ab9c00" stroke-width="1"/><line x1="866.5" y1="419" x2="866.5" y2="700" stroke="#ab9c00" stroke-width="1"/><line x1="151" y1="438.5" x2="946" y2="438.5" stroke="#ab9c00" stroke-width="1"/><line x1="151" y1="485.5" x2="946" y2="485.5" stroke="#ab9c00" stroke-width="1"/><line x1="151" y1="531.5" x2="946" y2="531.5" stroke="#ab9c00" stroke-width="1"/><line x1="151" y1="578.5" x2="946" y2="578.5" stroke="#ab9c00" stroke-width="1"/><line x1="151" y1="624.5" x2="946" y2="624.5" stroke="#ab9c00" stroke-width="1"/><line x1="151" y1="671.5" x2="946" y2="671.5" stroke="#ab9c00" stroke-width="1"/><rect x="151" y="700" width="796" height="1" fill="#e4e4e4"/><rect x="946" y="419" width="1" height="282" fill="#e4e4e4"/></svg>
<svg style="position:absolute;left:0;top:0" width="1039" height="986"><line x1="141.5" y1="420.00" x2="149.5" y2="420.00" stroke="#111" stroke-width="1.1"/><line x1="141.5" y1="438.63" x2="149.5" y2="438.63" stroke="#111" stroke-width="1.1"/><line x1="141.5" y1="485.22" x2="149.5" y2="485.22" stroke="#111" stroke-width="1.1"/><line x1="141.5" y1="531.80" x2="149.5" y2="531.80" stroke="#111" stroke-width="1.1"/><line x1="141.5" y1="578.39" x2="149.5" y2="578.39" stroke="#111" stroke-width="1.1"/><line x1="141.5" y1="624.97" x2="149.5" y2="624.97" stroke="#111" stroke-width="1.1"/><line x1="141.5" y1="671.56" x2="149.5" y2="671.56" stroke="#111" stroke-width="1.1"/><line x1="141.5" y1="699.51" x2="149.5" y2="699.51" stroke="#111" stroke-width="1.1"/><line x1="151.50" y1="701.5" x2="151.50" y2="708" stroke="#111" stroke-width="1.1"/><line x1="230.92" y1="701.5" x2="230.92" y2="708" stroke="#111" stroke-width="1.1"/><line x1="310.34" y1="701.5" x2="310.34" y2="708" stroke="#111" stroke-width="1.1"/><line x1="389.76" y1="701.5" x2="389.76" y2="708" stroke="#111" stroke-width="1.1"/><line x1="469.18" y1="701.5" x2="469.18" y2="708" stroke="#111" stroke-width="1.1"/><line x1="548.60" y1="701.5" x2="548.60" y2="708" stroke="#111" stroke-width="1.1"/><line x1="628.02" y1="701.5" x2="628.02" y2="708" stroke="#111" stroke-width="1.1"/><line x1="707.44" y1="701.5" x2="707.44" y2="708" stroke="#111" stroke-width="1.1"/><line x1="786.86" y1="701.5" x2="786.86" y2="708" stroke="#111" stroke-width="1.1"/><line x1="866.28" y1="701.5" x2="866.28" y2="708" stroke="#111" stroke-width="1.1"/><line x1="945.70" y1="701.5" x2="945.70" y2="708" stroke="#111" stroke-width="1.1"/><polyline points="336.5,419.5 337.7,471.0 340.2,532.0 341.7,587.0 343.0,642.0 344.3,699.0" fill="none" stroke="#e84848" stroke-width="1.4"/><polyline points="426.8,699.0 428.8,674.4 430.8,648.6 434.8,613.0 437.9,580.0 440.7,563.5 443.7,531.8 447.6,511.0 450.4,492.1 454.0,475.9 458.0,463.7 461.1,452.5 466.7,441.4 472.7,434.8 479.5,431.8 485.0,431.3 493.0,434.3 501.1,440.9 509.2,450.0 516.1,462.0 523.2,478.3 526.2,488.4 531.3,505.6 536.4,522.9 539.4,536.1 542.6,551.4 544.6,559.2 547.0,567.7 549.6,578.4 553.4,591.2 557.0,601.1 560.5,610.3 564.4,615.4 568.3,611.2 571.2,604.4 573.0,596.1 575.2,583.4 576.8,572.0 578.3,560.6 579.9,550.7 581.6,532.0 583.0,512.7 584.3,493.5 585.6,471.2 586.8,458.7 588.0,445.3 589.3,419.5" fill="none" stroke="#ea4a4a" stroke-width="1.5"/><path d="M424.6,699.0h4.4M426.8,696.8v4.4M426.4,677.5h4.4M428.6,675.3v4.4M428.1,655.0h4.4M430.3,652.8v4.4M429.9,637.5h4.4M432.1,635.3v4.4M431.6,621.9h4.4M433.8,619.7v4.4M433.4,605.0h4.4M435.6,602.8v4.4M435.1,586.4h4.4M437.3,584.2v4.4M436.9,573.2h4.4M439.1,571.0v4.4M438.6,562.4h4.4M440.8,560.2v4.4M440.4,544.0h4.4M442.6,541.8v4.4M442.1,528.6h4.4M444.3,526.4v4.4M443.9,519.3h4.4M446.1,517.1v4.4M445.6,509.7h4.4M447.8,507.5v4.4M447.4,497.8h4.4M449.6,495.6v4.4M449.1,488.0h4.4M451.3,485.8v4.4M450.9,480.2h4.4M453.1,478.0v4.4M452.6,473.5h4.4M454.8,471.3v4.4M454.4,468.1h4.4M456.6,465.9v4.4M456.1,462.6h4.4M458.3,460.4v4.4M457.9,456.3h4.4M460.1,454.1v4.4M459.6,451.1h4.4M461.8,448.9v4.4M461.4,447.6h4.4M463.6,445.4v4.4M463.1,444.2h4.4M465.3,442.0v4.4M464.9,441.0h4.4M467.1,438.8v4.4M466.6,439.1h4.4M468.8,436.9v4.4M468.4,437.2h4.4M470.6,435.0v4.4M470.1,435.2h4.4M472.3,433.0v4.4M471.9,434.2h4.4M474.1,432.0v4.4M473.6,433.4h4.4M475.8,431.2v4.4M475.4,432.7h4.4M477.6,430.5v4.4M477.1,431.9h4.4M479.3,429.7v4.4M478.9,431.7h4.4M481.1,429.5v4.4M480.6,431.5h4.4M482.8,429.3v4.4M482.4,431.3h4.4M484.6,429.1v4.4M484.1,431.8h4.4M486.3,429.6v4.4M485.9,432.4h4.4M488.1,430.2v4.4M487.6,433.1h4.4M489.8,430.9v4.4M489.4,433.8h4.4M491.6,431.6v4.4M491.1,434.5h4.4M493.3,432.3v4.4M492.9,436.0h4.4M495.1,433.8v4.4M494.6,437.4h4.4M496.8,435.2v4.4M496.4,438.8h4.4M498.6,436.6v4.4M498.1,440.2h4.4M500.3,438.0v4.4M499.9,442.0h4.4M502.1,439.8v4.4M501.6,443.9h4.4M503.8,441.7v4.4M503.4,445.9h4.4M505.6,443.7v4.4M505.1,447.9h4.4M507.3,445.7v4.4M506.9,449.8h4.4M509.1,447.6v4.4M508.6,452.8h4.4M510.8,450.6v4.4M510.3,455.8h4.4M512.5,453.6v4.4M512.1,458.9h4.4M514.3,456.7v4.4M513.8,461.9h4.4M516.0,459.7v4.4M515.6,465.9h4.4M517.8,463.7v4.4M517.3,469.9h4.4M519.5,467.7v4.4M519.1,473.9h4.4M521.3,471.7v4.4M520.8,478.0h4.4M523.0,475.8v4.4M522.6,483.7h4.4M524.8,481.5v4.4M524.3,489.6h4.4M526.5,487.4v4.4M526.1,495.5h4.4M528.3,493.3v4.4M527.8,501.4h4.4M530.0,499.2v4.4M529.6,507.3h4.4M531.8,505.1v4.4M531.3,513.2h4.4M533.5,511.0v4.4M533.1,519.2h4.4M535.3,517.0v4.4M534.8,525.8h4.4M537.0,523.6v4.4M536.6,533.5h4.4M538.8,531.3v4.4M538.3,541.6h4.4M540.5,539.4v4.4M540.1,550.0h4.4M542.3,547.8v4.4M541.8,557.1h4.4M544.0,554.9v4.4M543.6,563.4h4.4M545.8,561.2v4.4M545.3,570.0h4.4M547.5,567.8v4.4M547.1,577.2h4.4M549.3,575.0v4.4M548.8,583.3h4.4M551.0,581.1v4.4M550.6,589.2h4.4M552.8,587.0v4.4M552.3,594.4h4.4M554.5,592.2v4.4M554.1,599.2h4.4M556.3,597.0v4.4M555.8,603.9h4.4M558.0,601.7v4.4M557.6,608.5h4.4M559.8,606.3v4.4M559.3,611.7h4.4M561.5,609.5v4.4M561.1,614.0h4.4M563.3,611.8v4.4M562.8,614.7h4.4M565.0,612.5v4.4M564.6,612.8h4.4M566.8,610.6v4.4M566.3,610.6h4.4M568.5,608.4v4.4M568.1,606.5h4.4M570.3,604.3v4.4M569.8,600.5h4.4M572.0,598.3v4.4M571.6,591.5h4.4M573.8,589.3v4.4M573.3,580.9h4.4M575.5,578.7v4.4M575.1,568.2h4.4M577.3,566.0v4.4M576.8,556.0h4.4M579.0,553.8v4.4M578.6,540.8h4.4M580.8,538.6v4.4M580.3,518.9h4.4M582.5,516.7v4.4M582.1,493.5h4.4M584.3,491.3v4.4M583.8,466.5h4.4M586.0,464.3v4.4M585.6,447.5h4.4M587.8,445.3v4.4M334.3,419.5h4.4M336.5,417.3v4.4M335.9,480.8h4.4M338.1,478.6v4.4M337.5,519.8h4.4M339.7,517.6v4.4M339.1,572.3h4.4M341.3,570.1v4.4M340.7,637.8h4.4M342.9,635.6v4.4" stroke="#e84848" stroke-width="1.1" fill="none"/></svg>
<div class="t" style="left:108.23px;top:412.15px;font-size:15.301000000000002px;color:#000;transform-origin:0 0;transform:scaleX(0.9346);">-85.8</div>
<div class="t" style="left:120.15px;top:430.78px;font-size:15.301000000000002px;color:#000;transform-origin:0 0;transform:scaleX(0.9346);">-86</div>
<div class="t" style="left:108.20px;top:477.37px;font-size:15.301000000000002px;color:#000;transform-origin:0 0;transform:scaleX(0.9346);">-86.5</div>
<div class="t" style="left:120.25px;top:523.95px;font-size:15.301000000000002px;color:#000;transform-origin:0 0;transform:scaleX(0.9346);">-87</div>
<div class="t" style="left:108.20px;top:570.54px;font-size:15.301000000000002px;color:#000;transform-origin:0 0;transform:scaleX(0.9346);">-87.5</div>
<div class="t" style="left:120.15px;top:617.12px;font-size:15.301000000000002px;color:#000;transform-origin:0 0;transform:scaleX(0.9346);">-88</div>
<div class="t" style="left:108.20px;top:663.71px;font-size:15.301000000000002px;color:#000;transform-origin:0 0;transform:scaleX(0.9346);">-88.5</div>
<div class="t" style="left:108.23px;top:691.66px;font-size:15.301000000000002px;color:#000;transform-origin:0 0;transform:scaleX(0.9346);">-88.8</div>
<div class="t" style="left:139.16px;top:709.85px;font-size:15.301000000000002px;color:#000;transform-origin:0 0;transform:scaleX(0.9346);">-0.5</div>
<div class="t" style="left:214.60px;top:709.85px;font-size:15.301000000000002px;color:#000;transform-origin:0 0;transform:scaleX(0.9346);">-0.45</div>
<div class="t" style="left:297.91px;top:709.85px;font-size:15.301000000000002px;color:#000;transform-origin:0 0;transform:scaleX(0.9346);">-0.4</div>
<div class="t" style="left:373.44px;top:709.85px;font-size:15.301000000000002px;color:#000;transform-origin:0 0;transform:scaleX(0.9346);">-0.35</div>
<div class="t" style="left:456.85px;top:709.85px;font-size:15.301000000000002px;color:#000;transform-origin:0 0;transform:scaleX(0.9346);">-0.3</div>
<div class="t" style="left:532.28px;top:709.85px;font-size:15.301000000000002px;color:#000;transform-origin:0 0;transform:scaleX(0.9346);">-0.25</div>
<div class="t" style="left:615.74px;top:709.85px;font-size:15.301000000000002px;color:#000;transform-origin:0 0;transform:scaleX(0.9346);">-0.2</div>
<div class="t" style="left:691.12px;top:709.85px;font-size:15.301000000000002px;color:#000;transform-origin:0 0;transform:scaleX(0.9346);">-0.15</div>
<div class="t" style="left:774.57px;top:709.85px;font-size:15.301000000000002px;color:#000;transform-origin:0 0;transform:scaleX(0.9346);">-0.1</div>
<div class="t" style="left:849.96px;top:709.85px;font-size:15.301000000000002px;color:#000;transform-origin:0 0;transform:scaleX(0.9346);">-0.05</div>
<div class="t" style="left:941.72px;top:709.85px;font-size:15.301000000000002px;color:#000;transform-origin:0 0;transform:scaleX(0.9346);">0</div>
<div class="t" style="left:491.37px;top:731.50px;font-size:15.943000000000001px;color:#000;transform-origin:0 0;transform:scaleX(0.9365);">Axial Position (m)</div>
<div class="t" style="left:85.3px;top:627.5px;font-size:14.7px;transform-origin:0 0;transform:rotate(-90deg);">On-Axis Potential (V)</div>
<svg style="position:absolute;left:0;top:0" width="1039" height="986"><rect x="280" y="753.5" width="690" height="164.5" fill="#fff"/><path d="M282.5,771 V761.5 Q283,760.5 290,760.5 H320 Q325,760.5 325,762 V771" fill="none" stroke="#1e1e1e" stroke-width="1.3"/><path d="M282.5,879 V889.5 Q283,891 290,891 H320 Q325,891 325,889.5 V879" fill="none" stroke="#1e1e1e" stroke-width="1.3"/><line x1="325" y1="763" x2="968" y2="763" stroke="#1e1e1e" stroke-width="1.3"/><line x1="282" y1="770.8" x2="968" y2="770.8" stroke="#1e1e1e" stroke-width="1.1"/><line x1="282" y1="880" x2="968" y2="880" stroke="#1e1e1e" stroke-width="1.1"/><line x1="325" y1="888.6" x2="968" y2="888.6" stroke="#1e1e1e" stroke-width="1.3"/><line x1="968" y1="762.5" x2="968" y2="889" stroke="#1e1e1e" stroke-width="1.3"/><line x1="282.5" y1="770" x2="282.5" y2="880" stroke="#1e1e1e" stroke-width="1.3"/><rect x="282.4" y="772.6" width="125.6" height="106.4" rx="3" fill="#fff" stroke="#2e2e2e" stroke-width="1.3"/><rect x="284.4" y="775.8" width="122.0" height="101.5" fill="#ffc30f"/><rect x="407.7" y="772.6" width="54.9" height="106.4" rx="3" fill="#fff" stroke="#2e2e2e" stroke-width="1.3"/><line x1="411.1" y1="776" x2="411.1" y2="877.5" stroke="#2a2a2a" stroke-width="1.1"/><rect x="412.3" y="775.4" width="48.7" height="102.6" fill="#fff200"/><line x1="412.3" y1="795.5" x2="461.0" y2="795.5" stroke="#111" stroke-width="2"/><line x1="412.3" y1="865.0" x2="461.0" y2="865.0" stroke="#111" stroke-width="2"/><rect x="428.6" y="766.3" width="16" height="6.5" fill="#fff"/><path d="M428.1,772.5 V766 H431.6 V763.5 M441.6,763.5 V766 H445.1 V772.5" fill="none" stroke="#1e1e1e" stroke-width="1.1"/><rect x="428.6" y="879" width="16" height="6" fill="#fff"/><path d="M428.1,879 V885 H431.6 V888 M441.6,888 V885 H445.1 V879" fill="none" stroke="#1e1e1e" stroke-width="1.1"/><rect x="461.1" y="772.6" width="50.2" height="106.4" rx="3" fill="#fff" stroke="#2e2e2e" stroke-width="1.3"/><line x1="464.5" y1="776" x2="464.5" y2="877.5" stroke="#2a2a2a" stroke-width="1.1"/><rect x="465.7" y="775.4" width="44.0" height="102.6" fill="#ffc30f"/><rect x="479.7" y="766.3" width="16" height="6.5" fill="#fff"/><path d="M479.2,772.5 V766 H482.7 V763.5 M492.7,763.5 V766 H496.2 V772.5" fill="none" stroke="#1e1e1e" stroke-width="1.1"/><rect x="479.7" y="879" width="16" height="6" fill="#fff"/><path d="M479.2,879 V885 H482.7 V888 M492.7,888 V885 H496.2 V879" fill="none" stroke="#1e1e1e" stroke-width="1.1"/><rect x="511.4" y="772.6" width="52.2" height="106.4" rx="3" fill="#fff" stroke="#2e2e2e" stroke-width="1.3"/><line x1="514.8" y1="776" x2="514.8" y2="877.5" stroke="#2a2a2a" stroke-width="1.1"/><rect x="516.0" y="775.4" width="46.0" height="102.6" fill="#ffc30f"/><rect x="531.0" y="766.3" width="16" height="6.5" fill="#fff"/><path d="M530.5,772.5 V766 H534.0 V763.5 M544.0,763.5 V766 H547.5 V772.5" fill="none" stroke="#1e1e1e" stroke-width="1.1"/><rect x="531.0" y="879" width="16" height="6" fill="#fff"/><path d="M530.5,879 V885 H534.0 V888 M544.0,888 V885 H547.5 V879" fill="none" stroke="#1e1e1e" stroke-width="1.1"/><rect x="563.7" y="772.6" width="50.7" height="106.4" rx="3" fill="#fff" stroke="#2e2e2e" stroke-width="1.3"/><line x1="567.1" y1="776" x2="567.1" y2="877.5" stroke="#2a2a2a" stroke-width="1.1"/><rect x="568.3" y="775.4" width="44.5" height="102.6" fill="#ffc30f"/><rect x="582.5" y="766.3" width="16" height="6.5" fill="#fff"/><path d="M582.0,772.5 V766 H585.5 V763.5 M595.5,763.5 V766 H599.0 V772.5" fill="none" stroke="#1e1e1e" stroke-width="1.1"/><rect x="582.5" y="879" width="16" height="6" fill="#fff"/><path d="M582.0,879 V885 H585.5 V888 M595.5,888 V885 H599.0 V879" fill="none" stroke="#1e1e1e" stroke-width="1.1"/><rect x="613.4" y="772.6" width="50.7" height="106.4" rx="3" fill="#fff" stroke="#2e2e2e" stroke-width="1.3"/><line x1="616.8" y1="776" x2="616.8" y2="877.5" stroke="#2a2a2a" stroke-width="1.1"/><rect x="618.0" y="775.4" width="44.5" height="102.6" fill="#ffc30f"/><rect x="632.2" y="766.3" width="16" height="6.5" fill="#fff"/><path d="M631.8,772.5 V766 H635.2 V763.5 M645.2,763.5 V766 H648.8 V772.5" fill="none" stroke="#1e1e1e" stroke-width="1.1"/><rect x="632.2" y="879" width="16" height="6" fill="#fff"/><path d="M631.8,879 V885 H635.2 V888 M645.2,888 V885 H648.8 V879" fill="none" stroke="#1e1e1e" stroke-width="1.1"/><rect x="664.2" y="772.6" width="49.2" height="106.4" rx="3" fill="#fff" stroke="#2e2e2e" stroke-width="1.3"/><line x1="667.6" y1="776" x2="667.6" y2="877.5" stroke="#2a2a2a" stroke-width="1.1"/><rect x="668.8" y="775.4" width="43.0" height="102.6" fill="#fff200"/><line x1="668.8" y1="797.6" x2="711.8" y2="797.6" stroke="#111" stroke-width="2"/><line x1="668.8" y1="866.5" x2="711.8" y2="866.5" stroke="#111" stroke-width="2"/><rect x="682.3" y="766.3" width="16" height="6.5" fill="#fff"/><path d="M681.8,772.5 V766 H685.3 V763.5 M695.3,763.5 V766 H698.8 V772.5" fill="none" stroke="#1e1e1e" stroke-width="1.1"/><rect x="682.3" y="879" width="16" height="6" fill="#fff"/><path d="M681.8,879 V885 H685.3 V888 M695.3,888 V885 H698.8 V879" fill="none" stroke="#1e1e1e" stroke-width="1.1"/><rect x="713.8" y="772.6" width="49.1" height="106.4" rx="3" fill="#fff" stroke="#2e2e2e" stroke-width="1.3"/><rect x="716.9" y="777" width="45.4" height="97.5" rx="1.5" fill="none" stroke="#303030" stroke-width="1.2"/><rect x="718.4" y="779.2" width="42.9" height="93.4" fill="#ffc30f"/><ellipse cx="727.1" cy="801.8" rx="2.8" ry="2.1" fill="#3a3a4a" stroke="#fff" stroke-width="0.9"/><ellipse cx="727.1" cy="849.5" rx="2.8" ry="2.1" fill="#3a3a4a" stroke="#fff" stroke-width="0.9"/><rect x="731.8" y="766.3" width="16" height="6.5" fill="#fff"/><path d="M731.3,772.5 V766 H734.8 V763.5 M744.8,763.5 V766 H748.3 V772.5" fill="none" stroke="#1e1e1e" stroke-width="1.1"/><rect x="731.8" y="879" width="16" height="6" fill="#fff"/><path d="M731.3,879 V885 H734.8 V888 M744.8,888 V885 H748.3 V879" fill="none" stroke="#1e1e1e" stroke-width="1.1"/><rect x="764.8" y="772.6" width="48.5" height="106.4" rx="3" fill="#fff" stroke="#2e2e2e" stroke-width="1.3"/><rect x="767.9" y="777" width="44.8" height="97.5" rx="1.5" fill="none" stroke="#303030" stroke-width="1.2"/><rect x="769.4" y="779.2" width="42.3" height="93.4" fill="#ffc30f"/><ellipse cx="778.1" cy="801.8" rx="2.8" ry="2.1" fill="#3a3a4a" stroke="#fff" stroke-width="0.9"/><ellipse cx="778.1" cy="849.5" rx="2.8" ry="2.1" fill="#3a3a4a" stroke="#fff" stroke-width="0.9"/><rect x="782.5" y="766.3" width="16" height="6.5" fill="#fff"/><path d="M782.0,772.5 V766 H785.5 V763.5 M795.5,763.5 V766 H799.0 V772.5" fill="none" stroke="#1e1e1e" stroke-width="1.1"/><rect x="782.5" y="879" width="16" height="6" fill="#fff"/><path d="M782.0,879 V885 H785.5 V888 M795.5,888 V885 H799.0 V879" fill="none" stroke="#1e1e1e" stroke-width="1.1"/><rect x="816.0" y="772.6" width="49.6" height="106.4" rx="3" fill="#fff" stroke="#2e2e2e" stroke-width="1.3"/><line x1="819.4" y1="776" x2="819.4" y2="877.5" stroke="#2a2a2a" stroke-width="1.1"/><rect x="820.6" y="775.4" width="43.4" height="102.3" fill="#ffc30f"/><rect x="834.3" y="766.3" width="16" height="6.5" fill="#fff"/><path d="M833.8,772.5 V766 H837.3 V763.5 M847.3,763.5 V766 H850.8 V772.5" fill="none" stroke="#1e1e1e" stroke-width="1.1"/><rect x="834.3" y="879" width="16" height="6" fill="#fff"/><path d="M833.8,879 V885 H837.3 V888 M847.3,888 V885 H850.8 V879" fill="none" stroke="#1e1e1e" stroke-width="1.1"/><rect x="867.6" y="772.6" width="49.1" height="106.4" rx="3" fill="#fff" stroke="#2e2e2e" stroke-width="1.3"/><line x1="871.0" y1="776" x2="871.0" y2="877.5" stroke="#2a2a2a" stroke-width="1.1"/><rect x="872.2" y="775.4" width="42.9" height="102.3" fill="#ffc30f"/><rect x="885.7" y="766.3" width="16" height="6.5" fill="#fff"/><path d="M885.2,772.5 V766 H888.7 V763.5 M898.7,763.5 V766 H902.2 V772.5" fill="none" stroke="#1e1e1e" stroke-width="1.1"/><rect x="885.7" y="879" width="16" height="6" fill="#fff"/><path d="M885.2,879 V885 H888.7 V888 M898.7,888 V885 H902.2 V879" fill="none" stroke="#1e1e1e" stroke-width="1.1"/><rect x="918.3" y="772.6" width="49.6" height="106.4" rx="3" fill="#fff" stroke="#2e2e2e" stroke-width="1.3"/><line x1="921.7" y1="776" x2="921.7" y2="877.5" stroke="#2a2a2a" stroke-width="1.1"/><rect x="922.9" y="775.4" width="43.4" height="102.3" fill="#ffc30f"/><rect x="936.6" y="766.3" width="16" height="6.5" fill="#fff"/><path d="M936.1,772.5 V766 H939.6 V763.5 M949.6,763.5 V766 H953.1 V772.5" fill="none" stroke="#1e1e1e" stroke-width="1.1"/><rect x="936.6" y="879" width="16" height="6" fill="#fff"/><path d="M936.1,879 V885 H939.6 V888 M949.6,888 V885 H953.1 V879" fill="none" stroke="#1e1e1e" stroke-width="1.1"/><rect x="450.5" y="763" width="3.5" height="8" fill="#111"/><rect x="450.5" y="880" width="3.5" height="8.5" fill="#111"/><rect x="551.5" y="763" width="3.5" height="8" fill="#111"/><rect x="551.5" y="880" width="3.5" height="8.5" fill="#111"/><rect x="653" y="763" width="3.5" height="8" fill="#111"/><rect x="653" y="880" width="3.5" height="8.5" fill="#111"/><rect x="857" y="763" width="3.5" height="8" fill="#111"/><rect x="857" y="880" width="3.5" height="8.5" fill="#111"/><path d="M355.0,771 V767 H360.0 V764 H376.0 V767 H381.0 V775.5" fill="#fff" stroke="#1e1e1e" stroke-width="1.1"/><rect x="355.5" y="766.5" width="25" height="9" fill="#fff"/><path d="M355.0,879.5 V884 H360.0 V887 H376.0 V884 H381.0 V876" fill="#fff" stroke="#1e1e1e" stroke-width="1.1"/><rect x="355.5" y="876.5" width="25" height="8" fill="#fff"/><path d="M764,763 V760 Q765,759 770,759 H808 Q813,759 813,761 V763" fill="none" stroke="#1e1e1e" stroke-width="1.1"/><path d="M764,888.6 V891.5 Q765,892.5 770,892.5 H808 Q813,892.5 813,890.5 V888.6" fill="none" stroke="#1e1e1e" stroke-width="1.1"/><rect x="339" y="763" width="14" height="8" fill="none" stroke="#222" stroke-width="1"/><line x1="345" y1="764" x2="345" y2="775" stroke="#c000c0" stroke-width="1.2"/><line x1="372.2" y1="759.4" x2="372.2" y2="768.8" stroke="#20d0e0" stroke-width="1.5"/><path d="M341,876 v12 M347,876 v12 M337,882 h16" stroke="#222" stroke-width="1" fill="none"/><line x1="282" y1="827" x2="286" y2="827" stroke="#20c0d0" stroke-width="1"/><line x1="408" y1="827" x2="412" y2="827" stroke="#20c0d0" stroke-width="1"/><line x1="462" y1="827" x2="466" y2="827" stroke="#20c0d0" stroke-width="1"/><line x1="512" y1="827" x2="516" y2="827" stroke="#20c0d0" stroke-width="1"/><line x1="564" y1="827" x2="568" y2="827" stroke="#20c0d0" stroke-width="1"/><line x1="614" y1="827" x2="618" y2="827" stroke="#20c0d0" stroke-width="1"/><line x1="665" y1="827" x2="669" y2="827" stroke="#20c0d0" stroke-width="1"/><line x1="714" y1="827" x2="718" y2="827" stroke="#20c0d0" stroke-width="1"/><line x1="766" y1="827" x2="770" y2="827" stroke="#20c0d0" stroke-width="1"/><line x1="816" y1="827" x2="820" y2="827" stroke="#20c0d0" stroke-width="1"/><line x1="867" y1="827" x2="871" y2="827" stroke="#20c0d0" stroke-width="1"/><line x1="918" y1="827" x2="922" y2="827" stroke="#20c0d0" stroke-width="1"/><line x1="755" y1="755.5" x2="755" y2="895" stroke="#e8202a" stroke-width="4.2" stroke-linecap="round"/></svg>
<div class="t" style="left:299.8px;width:80px;text-align:center;top:898.7px;font-size:19.3px;letter-spacing:1.3px;transform:scaleX(1.3);color:#111">U11</div>
<div class="t" style="left:387.9px;width:80px;text-align:center;top:898.7px;font-size:19.3px;letter-spacing:1.3px;transform:scaleX(1.3);color:#111">U10</div>
<div class="t" style="left:446.6px;width:80px;text-align:center;top:898.7px;font-size:19.3px;letter-spacing:1.3px;transform:scaleX(1.3);color:#111">U9</div>
<div class="t" style="left:497.9px;width:80px;text-align:center;top:898.7px;font-size:19.3px;letter-spacing:1.3px;transform:scaleX(1.3);color:#111">U8</div>
<div class="t" style="left:548.9px;width:80px;text-align:center;top:898.7px;font-size:19.3px;letter-spacing:1.3px;transform:scaleX(1.3);color:#111">U7</div>
<div class="t" style="left:600.2px;width:80px;text-align:center;top:898.7px;font-size:19.3px;letter-spacing:1.3px;transform:scaleX(1.3);color:#111">U6</div>
<div class="t" style="left:651.5px;width:80px;text-align:center;top:898.7px;font-size:19.3px;letter-spacing:1.3px;transform:scaleX(1.3);color:#111">U5</div>
<div class="t" style="left:702.5px;width:80px;text-align:center;top:898.7px;font-size:19.3px;letter-spacing:1.3px;transform:scaleX(1.3);color:#111">U4</div>
<div class="t" style="left:753.8px;width:80px;text-align:center;top:898.7px;font-size:19.3px;letter-spacing:1.3px;transform:scaleX(1.3);color:#111">U3</div>
<div class="t" style="left:805.0px;width:80px;text-align:center;top:898.7px;font-size:19.3px;letter-spacing:1.3px;transform:scaleX(1.3);color:#111">U2</div>
<div class="t" style="left:856.0px;width:80px;text-align:center;top:898.7px;font-size:19.3px;letter-spacing:1.3px;transform:scaleX(1.3);color:#111">U1</div>
<div class="t" style="left:906.5px;width:80px;text-align:center;top:898.7px;font-size:19.3px;letter-spacing:1.3px;transform:scaleX(1.3);color:#111">D1</div>
</body></html>
